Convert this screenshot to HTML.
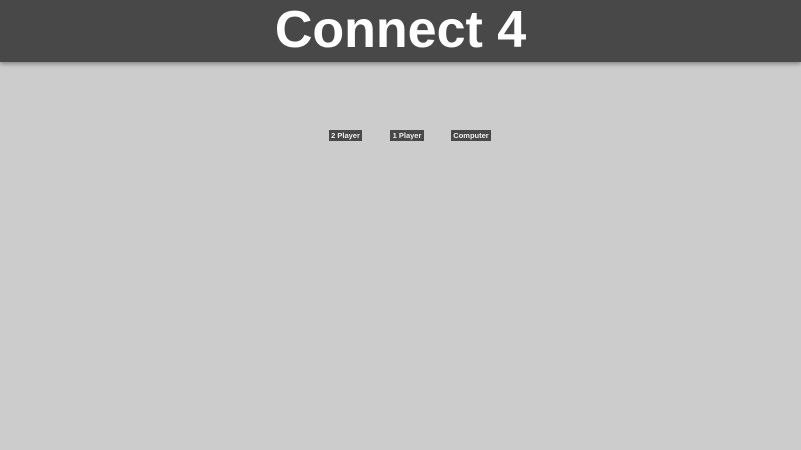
<!DOCTYPE html>
<html><head><style>
body{margin:0;width:801px;height:450px;background:#cccccc;overflow:hidden;font-family:"Liberation Sans",sans-serif;position:relative}
.h{position:absolute;left:0;top:0;width:801px;height:62px;background:#484848;box-shadow:0 2px 4px rgba(0,0,0,.35)}
.h div{position:absolute;left:0;width:801px;top:0;text-align:center;color:#fff;font-weight:bold;font-size:52px;line-height:60px}
.b{position:absolute;top:130px;height:11px;background:#484848;color:#eee;font-size:7.5px;font-weight:bold;line-height:12px;text-align:center}
</style></head><body>
<div class="h"><div>Connect 4</div></div>
<div class="b" style="left:329px;width:33px">2 Player</div>
<div class="b" style="left:390px;width:34px">1 Player</div>
<div class="b" style="left:451px;width:40px">Computer</div>
</body></html>
